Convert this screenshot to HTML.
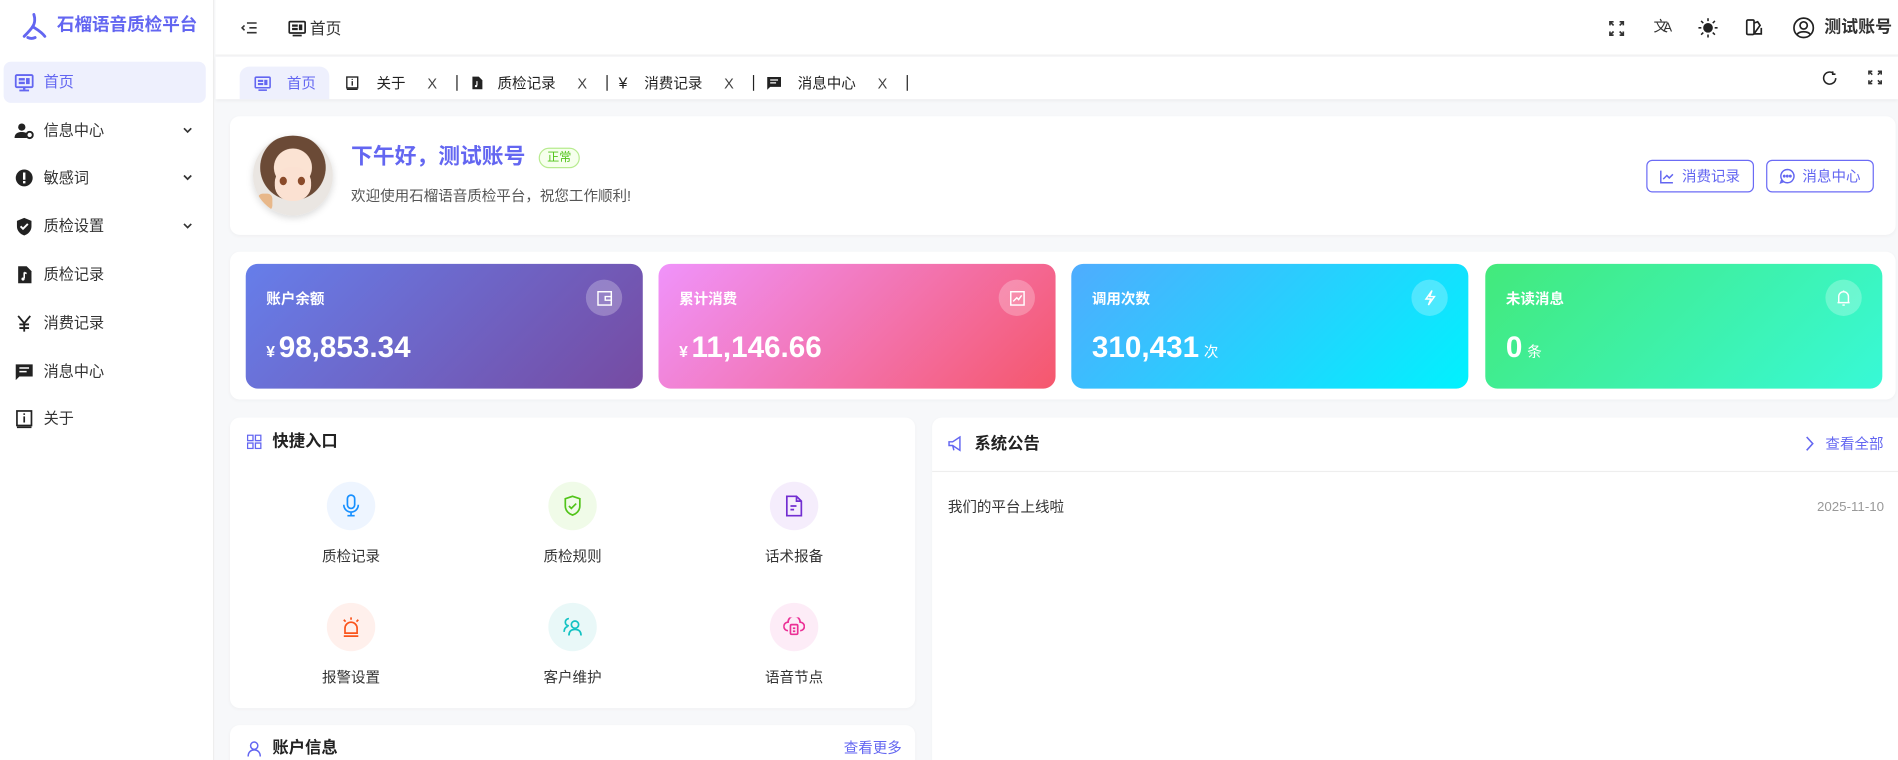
<!DOCTYPE html>
<html><head><meta charset="utf-8">
<style>
*{box-sizing:border-box;margin:0;padding:0}
html,body{width:1898px;height:760px;overflow:hidden;background:#f7f8fa}
#r{position:absolute;left:0;top:0;width:1568px;height:628px;overflow:hidden;transform:scale(1.2105);transform-origin:0 0;font-family:"Liberation Sans","Noto Sans CJK SC",sans-serif;color:#333;background:#f7f8fa}
.abs{position:absolute;line-height:1.2}
.side{left:0;top:0;width:177px;height:628px;background:#fff;border-right:1px solid #eee}
.logo{left:18px;top:10px;display:flex;align-items:center;gap:7px;color:#6366f1;font-weight:bold;font-size:14.5px}
.mi{left:3px;width:167px;height:34px;display:flex;align-items:center;font-size:12.5px;color:#333;padding-left:9px}
.mi svg{width:16px;height:16px;margin-right:8px}
.mi svg.ch{position:absolute;left:147px;top:12px;width:10px;height:10px;margin:0}
.act{background:#eef0fd;color:#6366f1;border-radius:6px}
.hdr{left:178px;top:0;right:0;height:46px;background:#fff;border-bottom:1px solid #f0f0f0}
.tabs{left:178px;top:47px;right:0;height:35px;background:#fff;box-shadow:0 1px 3px rgba(0,0,0,.06)}
.tab{position:absolute;top:8px;height:27px;display:flex;align-items:center;font-size:12px;color:#222}
.card{position:absolute;background:#fff;border-radius:8px;box-shadow:0 1px 3px rgba(0,0,0,.03)}
.stat{position:absolute;top:218px;width:328px;height:103px;border-radius:10px;color:#fff}
.stat .l{position:absolute;left:17px;top:20px;font-size:12px;font-weight:bold}
.stat .ic{position:absolute;right:17px;top:13px;width:30px;height:30px;border-radius:50%;background:rgba(255,255,255,.25);display:flex;align-items:center;justify-content:center}
.stat .v{position:absolute;left:17px;top:56px;font-size:24.5px;font-weight:bold;display:flex;align-items:baseline}
.stat .v small{font-size:12px;font-weight:normal;margin-left:4px}
.stat .v .y{font-size:13px;margin-right:3px}
.qi{position:absolute;width:100px;text-align:center;font-size:12px;color:#333}
.qi .c{width:40px;height:40px;border-radius:50%;margin:0 auto 13px;display:flex;align-items:center;justify-content:center}
.btn{position:absolute;top:132px;height:27px;border:1px solid #6b6bf5;border-radius:5px;color:#6366f1;font-size:12px;display:flex;align-items:center;justify-content:center;gap:6px}
</style></head><body><div id="r">
<div class="abs side"></div>
<div class="abs logo"><svg width="22" height="24" viewBox="0 0 22 24" fill="none" stroke="#6366f1" stroke-width="2.4" stroke-linecap="round"><path d="M10 2c1 3 1 7-1 10"/><path d="M9 12c-2 3-5 6-7 8"/><path d="M9 12c3 2 7 4 10 8"/><path d="M5 21c2 1 4 1 6 0"/></svg>石榴语音质检平台</div>
<div class="abs mi act" style="top:51px"><svg viewBox="0 0 16 16" fill="#6366f1"><rect x="1" y="2" width="14" height="10" rx="1" fill="none" stroke="#6366f1" stroke-width="1.5"/><rect x="3.5" y="4.5" width="5" height="2"/><rect x="3.5" y="7.5" width="5" height="2"/><rect x="9.5" y="4.5" width="3" height="5"/><rect x="7" y="12" width="2" height="2"/><rect x="4" y="14" width="8" height="1.5"/></svg>首页</div>
<div class="abs mi" style="top:91px"><svg viewBox="0 0 16 16" fill="#222"><circle cx="6" cy="5" r="3"/><path d="M0 14c0-4 3-5 6-5s4 1 4 1v4z"/><circle cx="12.5" cy="11.5" r="2.6" fill="none" stroke="#222" stroke-width="1.6"/></svg>信息中心<svg class="ch" viewBox="0 0 10 10" fill="none" stroke="#333" stroke-width="1.4"><path d="M2 3l3 3 3-3"/></svg></div>
<div class="abs mi" style="top:130px"><svg viewBox="0 0 16 16"><circle cx="8" cy="8" r="7" fill="#222"/><rect x="7" y="3.5" width="2" height="6" fill="#fff"/><rect x="7" y="10.5" width="2" height="2" fill="#fff"/></svg>敏感词<svg class="ch" viewBox="0 0 10 10" fill="none" stroke="#333" stroke-width="1.4"><path d="M2 3l3 3 3-3"/></svg></div>
<div class="abs mi" style="top:170px"><svg viewBox="0 0 16 16"><path d="M8 1l6 2.5v4.5c0 4-3 6.5-6 7.5-3-1-6-3.5-6-7.5V3.5z" fill="#222"/><path d="M5 8l2 2 4-4" fill="none" stroke="#fff" stroke-width="1.6"/></svg>质检设置<svg class="ch" viewBox="0 0 10 10" fill="none" stroke="#333" stroke-width="1.4"><path d="M2 3l3 3 3-3"/></svg></div>
<div class="abs mi" style="top:210px"><svg viewBox="0 0 16 16"><path d="M3 1h7l4 4v10H3z" fill="#222"/><path d="M8 6v5" stroke="#fff" stroke-width="1.3"/><circle cx="7" cy="11.5" r="1.3" fill="#fff"/><path d="M8 6l2 1" stroke="#fff" stroke-width="1.3"/></svg>质检记录</div>
<div class="abs mi" style="top:250px"><svg viewBox="0 0 16 16" fill="none" stroke="#222" stroke-width="1.5"><path d="M3 2l5 6 5-6M8 8v7M4 9h8M4 12h8"/></svg>消费记录</div>
<div class="abs mi" style="top:290px"><svg viewBox="0 0 16 16"><path d="M1 2h14v10H4l-3 3z" fill="#222"/><path d="M4 5h8M4 8h6" stroke="#fff" stroke-width="1.3"/></svg>消息中心</div>
<div class="abs mi" style="top:329px"><svg viewBox="0 0 16 16" fill="none" stroke="#222" stroke-width="1.4"><rect x="2" y="1.5" width="12" height="12"/><path d="M2 15h12M8 6v5M8 3.5v1.2"/></svg>关于</div>

<div class="abs hdr"></div>
<svg class="abs" style="left:199px;top:16px" width="14" height="14" viewBox="0 0 14 14" fill="none" stroke="#333" stroke-width="1.3"><path d="M5 3h8M7 7h6M5 11h8M3 5L1 7l2 2"/></svg>
<svg class="abs" style="left:238px;top:16px" width="15" height="15" viewBox="0 0 16 16" fill="#222"><rect x="1" y="2" width="14" height="10" rx="1" fill="none" stroke="#222" stroke-width="1.5"/><rect x="3.5" y="4.5" width="5" height="2"/><rect x="3.5" y="7.5" width="5" height="2"/><rect x="9.5" y="4.5" width="3" height="5"/><rect x="4" y="13.5" width="8" height="1.5"/></svg>
<div class="abs" style="left:256px;top:16px;font-size:13px;color:#333">首页</div>
<svg class="abs" style="left:1329px;top:17px" width="13" height="13" viewBox="0 0 13 13" fill="none" stroke="#333" stroke-width="1.4"><path d="M1 4V1h3M9 1h3v3M12 9v3H9M4 12H1V9M1 1l3 3M12 1L9 4M12 12L9 9M1 12l3-3"/></svg>
<div class="abs" style="left:1366px;top:15px;font-size:12px;color:#333">文<span style="font-size:11px;margin-left:-4px">A</span></div>
<svg class="abs" style="left:1403px;top:15px" width="16" height="16" viewBox="0 0 16 16"><circle cx="8" cy="8" r="4" fill="#222"/><g stroke="#222" stroke-width="1.3"><path d="M8 0v2.5M8 13.5V16M0 8h2.5M13.5 8H16M2.3 2.3l1.8 1.8M11.9 11.9l1.8 1.8M2.3 13.7l1.8-1.8M11.9 4.1l1.8-1.8"/></g></svg>
<svg class="abs" style="left:1442px;top:15px" width="15" height="15" viewBox="0 0 15 15" fill="none" stroke="#222" stroke-width="1.4"><rect x="1" y="1.5" width="6" height="12" rx="1"/><path d="M7 4l3-1 2 3-5 7M7 13h6V8"/></svg>
<svg class="abs" style="left:1481px;top:14px" width="18" height="18" viewBox="0 0 18 18" fill="none" stroke="#222" stroke-width="1.4"><circle cx="9" cy="9" r="8"/><circle cx="9" cy="7" r="3"/><path d="M3.5 14.5c2-3 9-3 11 0"/></svg>
<div class="abs" style="left:1507px;top:14px;font-size:14px;font-weight:bold;color:#333">测试账号</div>

<div class="abs tabs"></div>
<div class="tab" style="left:198px;top:55px;width:74px;background:#eef0fd;border-radius:8px 8px 0 0;color:#6366f1;padding-left:12px"><svg width="14" height="14" viewBox="0 0 16 16" fill="#6366f1" style="margin-right:13px"><rect x="1" y="2" width="14" height="10" rx="1" fill="none" stroke="#6366f1" stroke-width="1.5"/><rect x="3.5" y="4.5" width="5" height="2"/><rect x="3.5" y="7.5" width="5" height="2"/><rect x="9.5" y="4.5" width="3" height="5"/><rect x="4" y="13.5" width="8" height="1.5"/></svg>首页</div>
<div class="tab" style="left:285px;top:55px"><svg width="12" height="13" viewBox="0 0 16 16" fill="none" stroke="#222" stroke-width="1.5"><rect x="2" y="1.5" width="12" height="12"/><path d="M2 15h12M8 6v5M8 3.5v1.2"/></svg><span style="margin-left:14px">关于</span><span style="margin-left:18px;color:#444">X</span><span style="margin-left:16px;width:1px;height:13px;background:#222"></span></div>
<div class="tab" style="left:388px;top:55px"><svg width="12" height="13" viewBox="0 0 16 16"><path d="M3 1h7l4 4v10H3z" fill="#222"/><path d="M8 6v5" stroke="#fff" stroke-width="1.3"/><circle cx="7" cy="11.5" r="1.3" fill="#fff"/></svg><span style="margin-left:11px">质检记录</span><span style="margin-left:18px;color:#444">X</span><span style="margin-left:16px;width:1px;height:13px;background:#222"></span></div>
<div class="tab" style="left:511px;top:55px"><span style="font-size:13px">¥</span><span style="margin-left:14px">消费记录</span><span style="margin-left:18px;color:#444">X</span><span style="margin-left:16px;width:1px;height:13px;background:#222"></span></div>
<div class="tab" style="left:633px;top:55px"><svg width="13" height="13" viewBox="0 0 16 16"><path d="M1 2h14v10H4l-3 3z" fill="#222"/><path d="M4 5h8M4 8h6" stroke="#fff" stroke-width="1.3"/></svg><span style="margin-left:13px">消息中心</span><span style="margin-left:18px;color:#444">X</span><span style="margin-left:16px;width:1px;height:13px;background:#222"></span></div>
<svg class="abs" style="left:1505px;top:58px" width="13" height="13" viewBox="0 0 13 13" fill="none" stroke="#222" stroke-width="1.3"><path d="M11.5 6.5A5 5 0 1 1 9.5 2.5M9 1v2.3h2.3"/></svg>
<svg class="abs" style="left:1543px;top:58px" width="12" height="12" viewBox="0 0 13 13" fill="none" stroke="#333" stroke-width="1.4"><path d="M1 4V1h3M9 1h3v3M12 9v3H9M4 12H1V9M1 1l3 3M12 1L9 4M12 12L9 9M1 12l3-3"/></svg>

<div class="card" style="left:190px;top:96px;width:1376px;height:98px"></div>
<div class="abs" style="left:209px;top:112px;width:66px;height:66px;border-radius:50%;background:radial-gradient(circle at 50% 40%,#fbe3d3 0 30%,#6b4a36 31% 52%,#eae6e2 53%);box-shadow:0 2px 6px rgba(0,0,0,.15);overflow:hidden">
<div style="position:absolute;left:18px;top:26px;width:30px;height:28px;border-radius:45%;background:#fbe1d2"></div>
<div style="position:absolute;left:22px;top:34px;width:6px;height:7px;border-radius:50%;background:#8a4a2a"></div>
<div style="position:absolute;left:37px;top:34px;width:6px;height:7px;border-radius:50%;background:#8a4a2a"></div>
<div style="position:absolute;left:4px;top:48px;width:12px;height:14px;border-radius:4px;background:#e8b88a"></div></div>
<div class="abs" style="left:290px;top:119px;font-size:18px;font-weight:bold;color:#6366f1">下午好，测试账号</div>
<div class="abs" style="left:445px;top:122px;height:17px;padding:0 6px;font-size:10px;line-height:15px;color:#52c41a;background:#f6ffed;border:1px solid #b7eb8f;border-radius:9px">正常</div>
<div class="abs" style="left:290px;top:155px;font-size:12px;color:#555">欢迎使用石榴语音质检平台，祝您工作顺利!</div>
<div class="btn" style="left:1360px;width:89px"><svg width="12" height="12" viewBox="0 0 12 12" fill="none" stroke="#6366f1" stroke-width="1.2"><path d="M1 1v10h10M3 8l3-3 2 2 3-3"/></svg>消费记录</div>
<div class="btn" style="left:1459px;width:89px"><svg width="13" height="13" viewBox="0 0 13 13" fill="none" stroke="#6366f1" stroke-width="1.2"><path d="M6.5 1a5.5 5.5 0 1 1-4.6 8.5L1 12l2.5-1A5.5 5.5 0 0 1 6.5 1z"/><circle cx="4" cy="6.5" r=".6" fill="#6366f1"/><circle cx="6.5" cy="6.5" r=".6" fill="#6366f1"/><circle cx="9" cy="6.5" r=".6" fill="#6366f1"/></svg>消息中心</div>

<div class="card" style="left:190px;top:208px;width:1376px;height:122px"></div>
<div class="stat" style="left:203px;background:linear-gradient(135deg,#667eea,#764ba2)"><div class="l">账户余额</div><div class="ic"><svg width="13" height="13" viewBox="0 0 13 13" fill="none" stroke="#fff" stroke-width="1.2"><rect x="1" y="1" width="11" height="11"/><path d="M7 5h5v3H7z"/></svg></div><div class="v"><span class="y">¥</span>98,853.34</div></div>
<div class="stat" style="left:544px;background:linear-gradient(135deg,#f093fb,#f5576c)"><div class="l">累计消费</div><div class="ic"><svg width="13" height="13" viewBox="0 0 13 13" fill="none" stroke="#fff" stroke-width="1.2"><rect x="1" y="1" width="11" height="11"/><path d="M3 9l3-3 1.5 1.5L10 4"/></svg></div><div class="v"><span class="y">¥</span>11,146.66</div></div>
<div class="stat" style="left:885px;background:linear-gradient(135deg,#4facfe,#00f2fe)"><div class="l">调用次数</div><div class="ic"><svg width="12" height="14" viewBox="0 0 12 14" fill="none" stroke="#fff" stroke-width="1.2"><path d="M8 1L3 8h4l-2 5 5-7H6z"/></svg></div><div class="v">310,431<small>次</small></div></div>
<div class="stat" style="left:1227px;background:linear-gradient(135deg,#43e97b,#38f9d7)"><div class="l">未读消息</div><div class="ic"><svg width="12" height="14" viewBox="0 0 12 14" fill="none" stroke="#fff" stroke-width="1.2"><path d="M2 11V6a4 4 0 0 1 8 0v5zM1 11h10M6 1v1M5 13h2"/></svg></div><div class="v">0<small>条</small></div></div>

<div class="card" style="left:190px;top:345px;width:566px;height:240px"></div>
<svg class="abs" style="left:204px;top:359px" width="12" height="12" viewBox="0 0 12 12" fill="none" stroke="#6366f1" stroke-width="1.1"><rect x=".5" y=".5" width="4.5" height="4.5"/><rect x="7" y=".5" width="4.5" height="4.5"/><rect x=".5" y="7" width="4.5" height="4.5"/><rect x="7" y="7" width="4.5" height="4.5"/></svg>
<div class="abs" style="left:225px;top:357px;font-size:13.5px;font-weight:bold;color:#222">快捷入口</div>
<div class="qi" style="left:240px;top:398px"><div class="c" style="background:#eef5ff"><svg width="16" height="20" viewBox="0 0 16 20" fill="none" stroke="#1890ff" stroke-width="1.4"><rect x="5" y="1" width="6" height="11" rx="3"/><path d="M2 9a6 6 0 0 0 12 0M8 15v3M5 18h6"/></svg></div>质检记录</div>
<div class="qi" style="left:423px;top:398px"><div class="c" style="background:#f0fbe8"><svg width="16" height="18" viewBox="0 0 16 18" fill="none" stroke="#52c41a" stroke-width="1.4"><path d="M8 1l6 2v6c0 4-3 6.5-6 7.5C5 15.5 2 13 2 9V3z"/><path d="M5 9l2 2 4-4"/></svg></div>质检规则</div>
<div class="qi" style="left:606px;top:398px"><div class="c" style="background:#f5edfc"><svg width="14" height="18" viewBox="0 0 14 18" fill="none" stroke="#722ed1" stroke-width="1.4"><path d="M1 1h8l4 4v12H1zM9 1v4h4M4 9h5M4 12h3"/></svg></div>话术报备</div>
<div class="qi" style="left:240px;top:498px"><div class="c" style="background:#fff0ec"><svg width="18" height="18" viewBox="0 0 18 18" fill="none" stroke="#fa541c" stroke-width="1.4"><path d="M4 14V10a5 5 0 0 1 10 0v4zM3 16.5h12M9 1v2M3 3l1.5 1.5M15 3l-1.5 1.5"/></svg></div>报警设置</div>
<div class="qi" style="left:423px;top:498px"><div class="c" style="background:#e9f8f8"><svg width="18" height="18" viewBox="0 0 18 18" fill="none" stroke="#13c2c2" stroke-width="1.4"><circle cx="11" cy="7" r="3"/><path d="M6 16c0-4 2.5-5 5-5s5 1 5 5M6 2a3 3 0 0 0 0 6M2 13c0-3 1.5-4 3-4.5"/></svg></div>客户维护</div>
<div class="qi" style="left:606px;top:498px"><div class="c" style="background:#fdecf7"><svg width="18" height="16" viewBox="0 0 18 16" fill="none" stroke="#eb2f96" stroke-width="1.4"><path d="M4 11a3.5 3.5 0 0 1 0-7 5 5 0 0 1 10 0 3.5 3.5 0 0 1 0 7"/><rect x="6" y="6" width="6" height="8" rx="1"/><path d="M8 9h2M8 11.5h2"/></svg></div>语音节点</div>

<div class="card" style="left:190px;top:599px;width:566px;height:60px"></div>
<svg class="abs" style="left:204px;top:612px" width="12" height="14" viewBox="0 0 12 14" fill="none" stroke="#6366f1" stroke-width="1.2"><circle cx="6" cy="4" r="3"/><path d="M1 13c0-4 2.5-5.5 5-5.5s5 1.5 5 5.5"/></svg>
<div class="abs" style="left:225px;top:610px;font-size:13.5px;font-weight:bold;color:#222">账户信息</div>
<div class="abs" style="left:697px;top:611px;font-size:12px;color:#6366f1">查看更多</div>

<div class="card" style="left:770px;top:345px;width:798px;height:300px;border-radius:8px 0 0 0"></div>
<div class="abs" style="left:770px;top:389px;width:798px;height:1px;background:#eee"></div>
<svg class="abs" style="left:783px;top:360px" width="13" height="13" viewBox="0 0 13 13" fill="none" stroke="#6366f1" stroke-width="1.2"><path d="M1 5h3l6-4v11L4 8H1zM4 8l1 4"/></svg>
<div class="abs" style="left:805px;top:359px;font-size:13.5px;font-weight:bold;color:#222">系统公告</div>
<svg class="abs" style="left:1491px;top:360px" width="8" height="13" viewBox="0 0 8 13" fill="none" stroke="#6366f1" stroke-width="1.3"><path d="M1.5 1l5 5.5-5 5.5"/></svg>
<div class="abs" style="left:1508px;top:360px;font-size:12px;color:#6366f1">查看全部</div>
<div class="abs" style="left:783px;top:412px;font-size:12px;color:#333">我们的平台上线啦</div>
<div class="abs" style="left:1501px;top:413px;font-size:11px;color:#999">2025-11-10</div>
</div></body></html>
